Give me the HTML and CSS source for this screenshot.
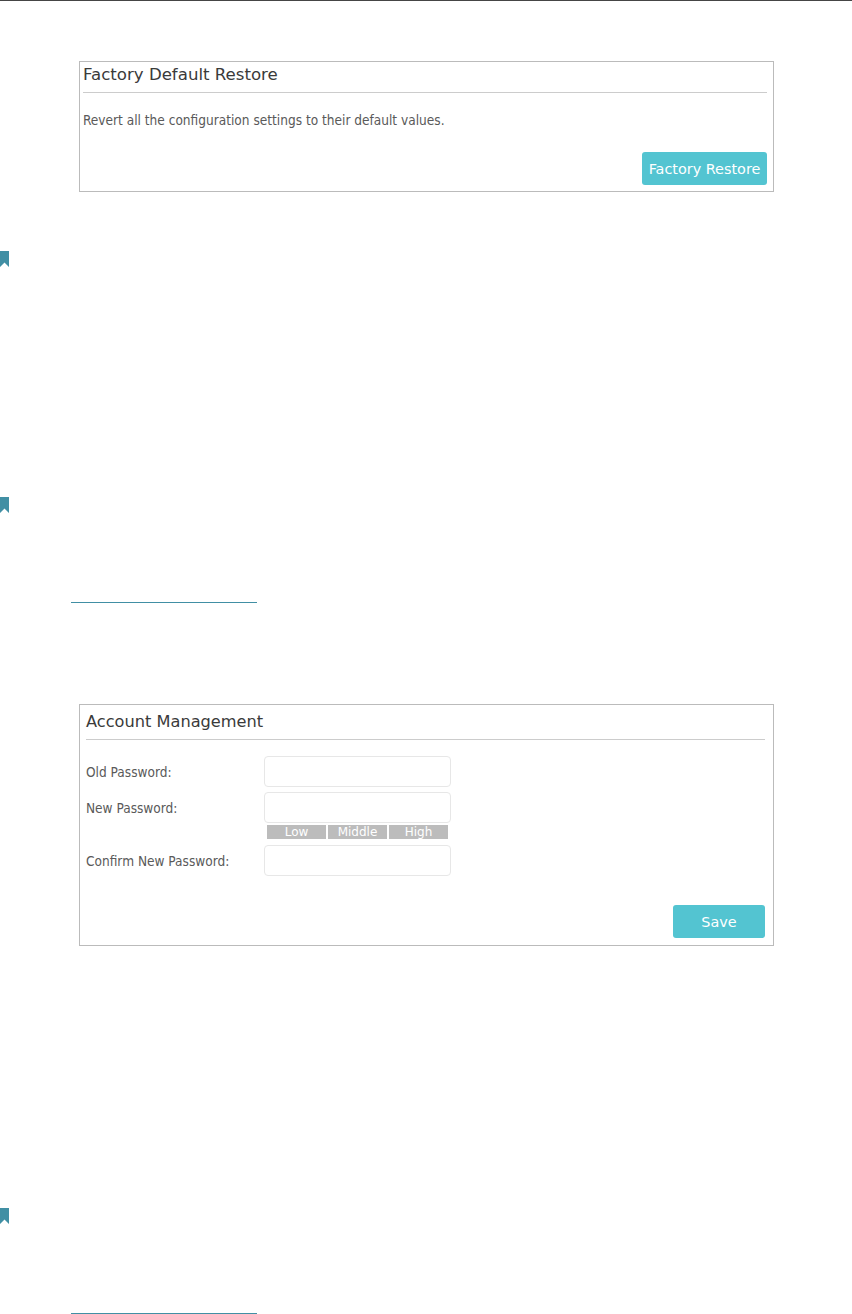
FILE: index.html
```html
<!DOCTYPE html>
<html lang="en">
<head>
  <meta charset="UTF-8" />
  <meta name="viewport" content="width=device-width, initial-scale=1.0"/>
  <title>System Tools</title>
  <link rel="stylesheet" href="styles.css">
</head>
<body>

  <div class="panel restore">
    <h2>Factory Default Restore</h2>
    <p class="description">Revert all the configuration settings to their default values.</p>
    <button type="button" class="btn btn-restore">Factory Restore</button>
  </div>

  <svg class="bookmark bookmark-first" viewBox="0 0 9 16"><path d="M0 0H9V16L4.5 11.5L0 16Z"/></svg>
  <svg class="bookmark bookmark-second" viewBox="0 0 9 16"><path d="M0 0H9V16L4.5 11.5L0 16Z"/></svg>
  <div class="link-line"></div>

  <form class="panel account">
    <h2>Account Management</h2>
    <div class="form-row">
      <label for="oldPassword">Old Password:</label>
      <input type="password" id="oldPassword" />
    </div>
    <div class="form-row new-row">
      <label for="newPassword">New Password:</label>
      <input type="password" id="newPassword" />
    </div>
    <div class="strength">
      <span>Low</span>
      <span>Middle</span>
      <span>High</span>
    </div>
    <div class="form-row">
      <label for="confirmPassword">Confirm New Password:</label>
      <input type="password" id="confirmPassword" />
    </div>
    <button type="button" class="btn btn-save">Save</button>
  </form>

  <svg class="bookmark bookmark-third" viewBox="0 0 9 16"><path d="M0 0H9V16L4.5 11.5L0 16Z"/></svg>
  <div class="link-line"></div>

</body>
</html>
```

FILE: styles.css
```css
* {
  box-sizing: border-box;
}

body {
  display: flex;
  flex-direction: column;
  align-items: flex-start;
  height: 1314px;
  margin: 0;
  padding-top: 60px;
  border-top: 1px solid #454545;
  background: white;
  color: #5a5a5a;
  font-family: "DejaVu Sans Condensed", "DejaVu Sans", sans-serif;
  font-size: 13.55px;
  overflow: hidden;
}

.panel {
  display: flex;
  flex-direction: column;
  width: 695px;
  margin-left: 79px;
  border: 1px solid #bbb;
}

.panel h2 {
  margin: 0;
  border-bottom: 1px solid #ccc;
  color: #3a3a3a;
  font-family: "DejaVu Sans", sans-serif;
  font-size: 16px;
  font-weight: normal;
  line-height: 26px;
  white-space: nowrap;
}

.restore {
  height: 131px;
  padding: 0 6px 0 3px;
}

.restore h2 {
  height: 31px;
  font-size: 16.6px;
}

.description {
  margin: 18px 0 0;
  line-height: 18px;
}

.btn {
  align-self: flex-end;
  height: 33px;
  padding: 0;
  border: none;
  border-radius: 3px;
  background-color: #53c4d1;
  color: white;
  font-family: "DejaVu Sans", sans-serif;
  font-size: 14.4px;
  white-space: nowrap;
}

.btn-restore {
  width: 125px;
  margin-top: 23px;
}

.bookmark {
  width: 9px;
  height: 16px;
  fill: #418fa4;
}

.bookmark-first {
  margin-top: 59px;
}

.bookmark-second {
  margin-top: 230px;
}

.bookmark-third {
  margin-top: 262px;
}

.link-line {
  width: 186px;
  height: 1px;
  margin: 89px 0 0 71px;
  background-color: #418fa4;
}

.account {
  height: 242px;
  margin-top: 101px;
  padding: 0 8px 0 6px;
}

.account h2 {
  height: 35px;
  margin-bottom: 16px;
  font-size: 16.2px;
  line-height: 33px;
}

.form-row {
  display: flex;
  align-items: center;
  height: 31px;
}

.form-row label {
  width: 178px;
}

.form-row input {
  width: 187px;
  height: 31px;
  border: 1px solid #e7e7e7;
  border-radius: 4px;
  outline: none;
}

.new-row {
  margin-top: 5px;
}

.strength {
  display: flex;
  gap: 2px;
  width: 181px;
  height: 14px;
  margin: 2px 0 6px 181px;
}

.strength span {
  flex: 1;
  background-color: #bcbcbc;
  color: white;
  font-family: "DejaVu Sans", sans-serif;
  font-size: 12px;
  line-height: 14px;
  text-align: center;
}

.btn-save {
  width: 92px;
  margin-top: 29px;
}
```
